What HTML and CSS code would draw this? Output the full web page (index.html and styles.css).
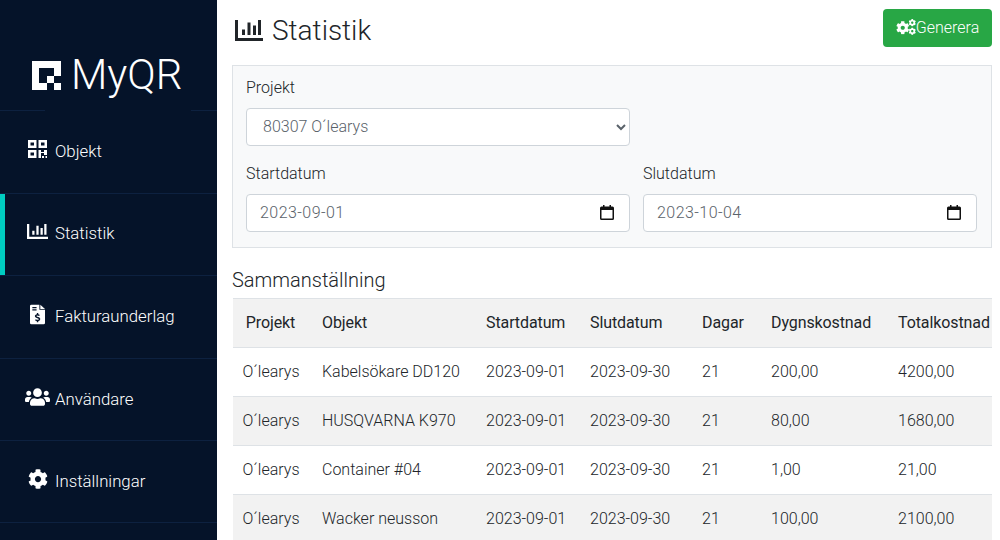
FILE: index.html
```html
<!DOCTYPE html>
<html lang="sv">
<head>
<meta charset="utf-8">
<title>MyQR – Statistik</title>
<link rel="stylesheet" href="styles.css">
</head>
<body>
<div class="app">
  <aside class="sidebar">
    <div class="brand">
      <svg class="brand-mark" viewBox="0 0 4 4" aria-hidden="true"><path d="M0 0H4V2H3V1H1V3H2V4H0Z"/><path d="M2 2H3V3H2ZM3 3H4V4H3Z"/></svg>
      <span class="brand-name">MyQR</span>
    </div>
    <nav class="nav">
      <a class="nav-item">
        <span class="nav-slot"><svg class="nav-icon icon-qr" viewBox="0 0 19 18" aria-hidden="true"><path fill-rule="evenodd" d="M0 0H8.500V8H0ZM2.500 2.500V5.500H6V2.500ZM10.500 0H19V8H10.500ZM13 2.500V5.500H16.500V2.500ZM0 10H8.500V18H0ZM2.500 12.500V15.500H6V12.500Z"/><path d="M10.500 10H13V12H16V10H19V15H16V13H13V18H10.500ZM14 16H16V18H14ZM17.500 16H19V18H17.500Z"/></svg></span>
        <span>Objekt</span>
      </a>
      <a class="nav-item active">
        <span class="nav-slot"><svg class="nav-icon icon-chart" viewBox="0 0 28 21" preserveAspectRatio="none" aria-hidden="true"><path d="M0 0H3V18H28V21H0Z"/><path d="M7 9.500H10V15H7ZM12.500 2.500H15.500V15H12.500ZM18 5.500H21V15H18ZM23 0H26V15H23Z"/></svg></span>
        <span>Statistik</span>
      </a>
      <a class="nav-item">
        <span class="nav-slot"><svg class="nav-icon icon-file" viewBox="0 0 16 21" aria-hidden="true"><path fill-rule="evenodd" d="M1.500 0H10V5.500H16V19.500A1.500 1.500 0 0 1 14.500 21H1.500A1.500 1.500 0 0 1 0 19.500V1.500A1.500 1.500 0 0 1 1.500 0ZM2.500 2.500V3.800H7V2.500ZM2.500 5V6.300H7V5ZM7.300 9V10.100C6 10.300 5.200 11.100 5.200 12.200C5.200 13.500 6.200 13.900 7.300 14.300L8.400 14.700C9 14.900 9.300 15.100 9.300 15.500C9.300 16 8.800 16.200 8.200 16.200C7.500 16.200 6.800 16 6.200 15.600L5.300 16.700C6 17.200 6.600 17.500 7.300 17.600V18.700H8.800V17.600C10.100 17.400 10.900 16.600 10.900 15.400C10.900 14.100 10 13.600 8.800 13.200L7.700 12.800C7.100 12.600 6.800 12.400 6.800 12.100C6.800 11.700 7.300 11.500 7.900 11.500C8.500 11.500 9.100 11.700 9.700 12L10.500 10.900C9.900 10.500 9.400 10.300 8.800 10.100V9Z"/><path d="M11 0.200L16 4.500H11Z"/></svg></span>
        <span>Fakturaunderlag</span>
      </a>
      <a class="nav-item">
        <span class="nav-slot"><svg class="nav-icon icon-users" viewBox="0 0 640 512" aria-hidden="true"><path d="M96 224c35.300 0 64-28.700 64-64s-28.700-64-64-64-64 28.700-64 64 28.700 64 64 64zm448 0c35.300 0 64-28.700 64-64s-28.700-64-64-64-64 28.700-64 64 28.700 64 64 64zm32 32h-64c-17.600 0-33.500 7.100-45.100 18.600 40.300 22.100 68.900 62 75.100 109.400h66c17.700 0 32-14.300 32-32v-32c0-35.300-28.700-64-64-64zm-256 0c61.900 0 112-50.100 112-112S381.900 32 320 32 208 82.100 208 144s50.100 112 112 112zm76.800 32h-8.300c-20.800 10-43.900 16-68.500 16s-47.600-6-68.500-16h-8.300C179.600 288 128 339.600 128 403.200V432c0 26.500 21.500 48 48 48h288c26.500 0 48-21.500 48-48v-28.800c0-63.600-51.600-115.200-115.200-115.200zm-223.700-13.400C161.500 263.100 145.600 256 128 256H64c-35.300 0-64 28.700-64 64v32c0 17.700 14.300 32 32 32h65.900c6.300-47.400 34.900-87.300 75.200-109.400z"/></svg></span>
        <span>Användare</span>
      </a>
      <a class="nav-item">
        <span class="nav-slot"><svg class="nav-icon icon-gear" viewBox="0 0 512 512" aria-hidden="true"><use href="#gear"/></svg></span>
        <span>Inställningar</span>
      </a>
    </nav>
  </aside>

  <main class="main">
    <header class="page-head">
      <h1 class="page-title">
        <svg class="title-icon" viewBox="0 0 28 21" aria-hidden="true"><path d="M0 0H3V18H28V21H0Z"/><path d="M7 9.500H10V15H7ZM12.500 2.500H15.500V15H12.500ZM18 5.500H21V15H18ZM23 0H26V15H23Z"/></svg>
        Statistik
      </h1>
      <button class="btn-generate" type="button">
        <svg class="btn-icon" viewBox="0 0 20 16" aria-hidden="true">
          <use href="#gear" width="13.500" height="13.500" x="0" y="2"/>
          <use href="#gear" width="7.500" height="7.500" x="12.500" y="0"/>
          <use href="#gear" width="7.500" height="7.500" x="12.500" y="8.500"/>
        </svg>
        <span>Generera</span>
      </button>
    </header>

    <section class="filters">
      <label class="field">
        <span class="field-label">Projekt</span>
        <select class="control select-project"><option>80307 O´learys</option></select>
      </label>
      <div class="date-row">
        <label class="field">
          <span class="field-label">Startdatum</span>
          <span class="date-control">
            <input class="control date-input" type="text" value="2023-09-01">
            <svg class="cal-icon" viewBox="0 0 14 15" aria-hidden="true"><path fill-rule="evenodd" d="M3 0H4.500V1.500H9.500V0H11V1.500H12.500A1.500 1.500 0 0 1 14 3V13.500A1.500 1.500 0 0 1 12.500 15H1.500A1.500 1.500 0 0 1 0 13.500V3A1.500 1.500 0 0 1 1.500 1.500H3ZM1.500 5V13.500H12.500V5Z"/></svg>
          </span>
        </label>
        <label class="field">
          <span class="field-label">Slutdatum</span>
          <span class="date-control">
            <input class="control date-input" type="text" value="2023-10-04">
            <svg class="cal-icon" viewBox="0 0 14 15" aria-hidden="true"><path fill-rule="evenodd" d="M3 0H4.500V1.500H9.500V0H11V1.500H12.500A1.500 1.500 0 0 1 14 3V13.500A1.500 1.500 0 0 1 12.500 15H1.500A1.500 1.500 0 0 1 0 13.500V3A1.500 1.500 0 0 1 1.500 1.500H3ZM1.500 5V13.500H12.500V5Z"/></svg>
          </span>
        </label>
      </div>
    </section>

    <h2 class="section-title">Sammanställning</h2>

    <div class="table-wrap">
      <table class="summary">
        <colgroup><col class="c1"><col class="c2"><col class="c3"><col class="c4"><col class="c5"><col class="c6"><col class="c7"></colgroup>
        <thead>
          <tr><th class="first">Projekt</th><th>Objekt</th><th>Startdatum</th><th>Slutdatum</th><th>Dagar</th><th>Dygnskostnad</th><th>Totalkostnad</th></tr>
        </thead>
        <tbody>
          <tr><td class="first">O´learys</td><td>Kabelsökare DD120</td><td>2023-09-01</td><td>2023-09-30</td><td>21</td><td>200,00</td><td>4200,00</td></tr>
          <tr><td class="first">O´learys</td><td>HUSQVARNA K970</td><td>2023-09-01</td><td>2023-09-30</td><td>21</td><td>80,00</td><td>1680,00</td></tr>
          <tr><td class="first">O´learys</td><td>Container #04</td><td>2023-09-01</td><td>2023-09-30</td><td>21</td><td>1,00</td><td>21,00</td></tr>
          <tr><td class="first">O´learys</td><td>Wacker neusson</td><td>2023-09-01</td><td>2023-09-30</td><td>21</td><td>100,00</td><td>2100,00</td></tr>
        </tbody>
      </table>
    </div>
  </main>
</div>

<svg class="defs" aria-hidden="true">
  <defs>
    <symbol id="gear" viewBox="0 0 512 512">
      <path d="M487.400 315.700l-42.600-24.600c4.300-23.200 4.300-47 0-70.200l42.600-24.600c4.900-2.800 7.100-8.600 5.500-14-11.100-35.600-30-67.800-54.700-94.600-3.800-4.100-10-5.100-14.800-2.300L380.800 110c-17.900-15.400-38.500-27.300-60.800-35.100V25.800c0-5.600-3.900-10.500-9.400-11.700-36.700-8.200-74.300-7.800-109.200 0-5.500 1.200-9.400 6.100-9.400 11.700V75c-22.200 7.900-42.800 19.800-60.800 35.100L88.700 85.500c-4.900-2.800-11-1.900-14.800 2.300-24.700 26.700-43.600 58.900-54.700 94.600-1.700 5.400.6 11.200 5.500 14L67.300 221c-4.300 23.200-4.300 47 0 70.200l-42.600 24.600c-4.900 2.800-7.100 8.600-5.500 14 11.100 35.600 30 67.800 54.700 94.600 3.800 4.100 10 5.100 14.800 2.300l42.600-24.600c17.900 15.400 38.500 27.300 60.800 35.100v49.200c0 5.600 3.900 10.500 9.400 11.700 36.700 8.200 74.300 7.800 109.200 0 5.500-1.200 9.400-6.100 9.400-11.700v-49.200c22.200-7.900 42.800-19.800 60.800-35.100l42.600 24.600c4.900 2.800 11 1.900 14.800-2.300 24.700-26.700 43.600-58.900 54.700-94.600 1.500-5.500-.7-11.300-5.600-14.100zM256 336c-44.100 0-80-35.900-80-80s35.900-80 80-80 80 35.900 80 80-35.900 80-80 80z"/>
    </symbol>
  </defs>
</svg>
</body>
</html>
```

FILE: styles.css
```css
* { box-sizing: border-box; }
html, body { margin: 0; height: 100%; overflow: hidden; }
body { font-family: Roboto, "Liberation Sans", sans-serif; font-size: 16px; color: #212529; background: #fff; }
.defs { width: 0; height: 0; position: absolute; }

.app { display: flex; height: 540px; }

.sidebar { width: 217px; flex: none; background: #051329; color: #fff; }
.brand { height: 110px; position: relative; z-index: 1; display: flex; align-items: center; padding: 40px 0 0 32px; gap: 10px; }
.brand::after { content: ""; position: absolute; left: 45px; width: 146px; bottom: -1px; height: 1px; background: #051329; }
.brand-mark { width: 29px; height: 29px; fill: #fff; flex: none; shape-rendering: crispEdges; }
.brand-name { font-size: 42px; font-weight: 300; line-height: 1; }
.nav-item { height: 82.6px; border-top: 1px solid #0d2140; display: flex; align-items: center; gap: 5px; padding: 0 0 2px 25px; color: #fff; font-size: 16.8px; font-weight: 300; position: relative; }
.nav-item:last-child { border-bottom: 1px solid #0d2140; }
.nav-item.active::before { content: ""; position: absolute; left: 0; top: 0; bottom: 0; width: 5px; background: #00cdc1; }
.nav-slot { width: 25px; flex: none; display: flex; justify-content: center; margin-bottom: 3px; }
.nav-icon { fill: #fff; display: block; }
.icon-qr { width: 19px; height: 18px; }
.icon-chart { width: 21px; height: 15px; }
.icon-file { width: 15px; height: 21px; }
.icon-users { width: 25px; height: 20px; }
.icon-gear { width: 20px; height: 20px; }

.main { flex: 1; min-width: 0; padding: 9px 8px 0 15px; }
.page-head { display: flex; justify-content: space-between; align-items: flex-start; height: 56px; }
.page-title { margin: 1px 0 0; font-size: 28px; font-weight: 300; line-height: 42px; display: flex; align-items: center; gap: 9px; padding-left: 3px; }
.title-icon { width: 28px; height: 21px; fill: #212529; margin-bottom: 2px; }
.btn-generate { width: 109px; height: 38px; border: 0; border-radius: 4px; background: #28a745; color: #fff; font: 300 16px Roboto, sans-serif; display: flex; align-items: center; justify-content: center; padding: 0 0 2px 0; }
.btn-icon { width: 20px; height: 16px; flex: none; fill: #fff; }

.filters { background: #f8f9fa; border: 1px solid #dee2e6; height: 183px; padding: 10px 13px 0; }
.field { display: block; }
.field-label { display: block; font-weight: 300; line-height: 24px; margin-bottom: 8px; }
.control { display: block; width: 100%; height: 38px; border: 1px solid #ced4da; border-radius: 4px; background: #fff; color: #5a626a; font: 300 16px Roboto, sans-serif; padding: 4px 12px 6px; }
.date-input { padding-left: 13px; letter-spacing: 0.45px; }
.select-project { width: 384px; }
.date-row { display: grid; grid-template-columns: 384px 334px; column-gap: 13px; margin-top: 16px; }
.date-control { display: block; position: relative; }
.cal-icon { position: absolute; right: 16px; top: 11px; width: 14px; height: 15px; fill: #111; }

.section-title { margin: 0; font-size: 20px; font-weight: 300; line-height: 24px; padding-top: 20px; height: 50px; }

.table-wrap { margin-left: 1px; overflow: hidden; }
.summary { border-collapse: collapse; table-layout: fixed; width: 769px; }
.c1 { width: 76px; } .c2 { width: 164px; } .c3 { width: 104px; } .c4 { width: 112px; } .c5 { width: 69px; } .c6 { width: 127px; } .c7 { width: 117px; }
.summary th, .summary td { text-align: left; padding: 12px 13px; line-height: 24px; border-top: 1px solid #dee2e6; white-space: nowrap; }
.summary th { font-weight: 400; letter-spacing: -0.1px; background: #f2f2f2; border-bottom: 1px solid #dee2e6; height: 49px; padding: 11px 13px 12px; }
.summary td { font-weight: 300; height: 49px; }
.summary th.first { text-align: center; padding: 11px 1px 12px 0; }
.summary td.first { text-align: center; padding-left: 0; padding-right: 0; }
.summary tbody tr:nth-child(even) td { background: #f2f2f2; }
```
